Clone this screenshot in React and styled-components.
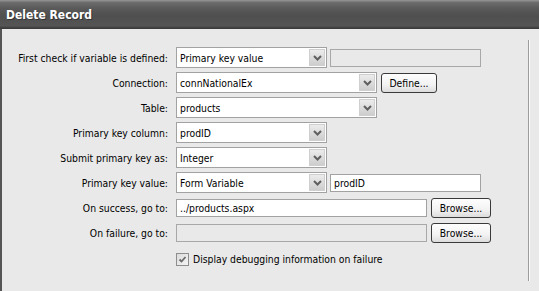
import React from 'react'
import styled, { createGlobalStyle } from 'styled-components'

const Global = createGlobalStyle`
  html, body {
    margin: 0;
    padding: 0;
    background: #e9e9e9;
  }
  body {
    font-family: "DejaVu Sans Condensed", "Liberation Sans", Arial, sans-serif;
    font-size: 10.3px;
    color: #000;
  }
`

const rows = [
  { label: 'First check if variable is defined:', select: 'Primary key value', width: 151, input: { value: '', disabled: true } },
  { label: 'Connection:', select: 'connNationalEx', width: 201, button: 'Define...' },
  { label: 'Table:', select: 'products', width: 201 },
  { label: 'Primary key column:', select: 'prodID', width: 151 },
  { label: 'Submit primary key as:', select: 'Integer', width: 151 },
  { label: 'Primary key value:', select: 'Form Variable', width: 151, input: { value: 'prodID' } },
  { label: 'On success, go to:', field: { value: '../products.aspx' }, button: 'Browse...' },
  { label: 'On failure, go to:', field: { value: '', disabled: true }, button: 'Browse...' },
]

function Chevron() {
  return (
    <svg width="9" height="6" viewBox="0 0 9 6">
      <path d="M1 1 L4.5 4.5 L8 1" fill="none" stroke="#5f5f5f" strokeWidth="2" />
    </svg>
  )
}

function Check() {
  return (
    <svg width="9" height="9" viewBox="0 0 9 9">
      <path d="M1.5 4.5 L3.5 6.5 L7.5 2" fill="none" stroke="#6a6a6a" strokeWidth="1.8" />
    </svg>
  )
}

export default function App() {
  return (
    <Window>
      <Global />
      <TitleBar>Delete Record</TitleBar>
      <Body>
        <Form>
          {rows.map((row, i) => (
            <Row key={i}>
              <Label>{row.label}</Label>
              <Controls>
                {row.select && (
                  <Select $width={row.width}>
                    <SelectText>{row.select}</SelectText>
                    <ArrowButton>
                      <Chevron />
                    </ArrowButton>
                  </Select>
                )}
                {row.input && (
                  <TextInput $width={151} $disabled={row.input.disabled}>
                    {row.input.value}
                  </TextInput>
                )}
                {row.field && (
                  <TextInput $width={251} $disabled={row.field.disabled}>
                    {row.field.value}
                  </TextInput>
                )}
                {row.button && (
                  <Button $width={row.button === 'Define...' ? 56 : 60}>{row.button}</Button>
                )}
              </Controls>
            </Row>
          ))}
          <Row>
            <Label />
            <CheckRow>
              <CheckBox>
                <Check />
              </CheckBox>
              <span>Display debugging information on failure</span>
            </CheckRow>
          </Row>
        </Form>
      </Body>
    </Window>
  )
}

const Window = styled.div`
  width: 539px;
  height: 291px;
  overflow: hidden;
  display: flex;
  flex-direction: column;
`

const TitleBar = styled.div`
  height: 29px;
  flex-shrink: 0;
  box-sizing: border-box;
  padding: 0 0 0 6px;
  display: flex;
  align-items: center;
  background: linear-gradient(
    #8e8e8e 0,
    #8e8e8e 1px,
    #6e6e6e 2px,
    #5a5a5a 8px,
    #4f4f4f 16px,
    #555 26px,
    #3c3c3c 28px,
    #3c3c3c 29px
  );
  color: #fff;
  font-family: "DejaVu Sans Condensed", "Liberation Sans", Arial, sans-serif;
  font-weight: bold;
  font-size: 12px;
  text-shadow: 1px 1px 0 #333;
`

const Body = styled.div`
  flex: 1;
  display: flex;
  border-left: 2px solid #555;
  background: #e9e9e9;
  padding-top: 11px;
`

const Form = styled.div`
  width: 527px;
  height: 241px;
  box-sizing: border-box;
  padding-top: 7px;
  display: flex;
  flex-direction: column;
  gap: 4px;
  border-right: 1px solid #9c9c9c;
  box-shadow: 1px 0 0 #fafafa;
`

const Row = styled.div`
  display: flex;
  align-items: center;
  height: 21px;
  gap: 8px;
`

const Label = styled.div`
  width: 166px;
  flex-shrink: 0;
  text-align: right;
  white-space: nowrap;
`

const Controls = styled.div`
  display: flex;
  align-items: center;
  gap: 3px;
`

const Select = styled.div`
  width: ${(p) => p.$width}px;
  height: 21px;
  box-sizing: border-box;
  border: 1px solid #a2a2a2;
  background: #fff;
  display: flex;
  align-items: center;
  justify-content: space-between;
  padding-right: 1px;
`

const SelectText = styled.span`
  padding-left: 3px;
  white-space: nowrap;
`

const ArrowButton = styled.div`
  width: 16px;
  height: 17px;
  box-sizing: border-box;
  border: 1px solid #cfcfcf;
  background: linear-gradient(#ececec, #cdcdcd);
  display: flex;
  align-items: center;
  justify-content: center;
`

const TextInput = styled.div`
  width: ${(p) => p.$width}px;
  height: 18px;
  box-sizing: border-box;
  border: 1px solid ${(p) => (p.$disabled ? '#a8a8a8' : '#a2a2a2')};
  background: ${(p) => (p.$disabled ? '#e9e9e9' : '#fff')};
  padding-left: 3px;
  display: flex;
  align-items: center;
  white-space: nowrap;
`

const Button = styled.div`
  width: ${(p) => p.$width}px;
  height: 20px;
  margin-left: 1px;
  box-sizing: border-box;
  border: 1px solid #3a3a3a;
  border-radius: 3px;
  background: linear-gradient(#fefefe, #f2f2f2 60%, #dcdcdc);
  display: flex;
  align-items: center;
  justify-content: center;
  white-space: nowrap;
`

const CheckRow = styled.div`
  display: flex;
  align-items: center;
  gap: 4px;
  margin-top: 3px;
`

const CheckBox = styled.div`
  width: 13px;
  height: 13px;
  box-sizing: border-box;
  border: 1px solid #8e8e8e;
  background: linear-gradient(135deg, #dcdcdc, #f4f4f4);
  display: flex;
  align-items: center;
  justify-content: center;
`
